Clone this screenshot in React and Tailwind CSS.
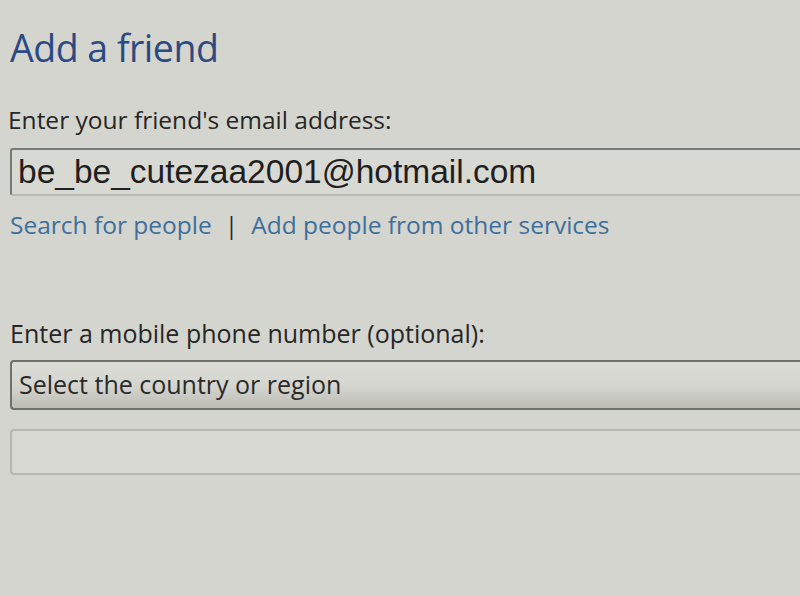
export default function App() {
  return (
    <div className="w-[800px] h-[596px] overflow-hidden bg-[#d5d5cf] text-[#2a2a2a]" style={{ fontFamily: '"Open Sans", "Noto Sans", sans-serif' }}>
      <div className="pl-[10px] pt-[24px]">
        {/* HEADING */}
        <h1 className="text-[37.5px] leading-[48px] text-[#2b4a82] tracking-[-0.5px]">Add a friend</h1>

        {/* EMAIL */}
        <div className="mt-[33px] text-[24.5px] leading-[30px] -ml-[2px] text-[#262626]">Enter your friend's email address:</div>
        <div className="mt-[13px] h-[48px] border-2 border-r-0 border-[#737a78] border-b-[#b9bab4] rounded-l-[3px] bg-[#d9d9d4] flex items-center pl-[6px]">
          <span className="text-[33.5px] leading-none text-[#1f1f1f]" style={{ fontFamily: '"Liberation Sans", Arial, sans-serif' }}>be_be_cutezaa2001@hotmail.com</span>
        </div>
        <div className="mt-[12px] flex items-center text-[24.5px] leading-[34px] text-[#3e6f9c]">
          <span>Search for people</span>
          <span className="mx-[13px] text-[#2a2a2a]">|</span>
          <span>Add people from other services</span>
        </div>

        {/* MOBILE */}
        <div className="mt-[76px] text-[25px] leading-[30px] text-[#262626]">Enter a mobile phone number (optional):</div>
        <div className="mt-[12px] h-[50px] border-2 border-r-0 border-[#6f716c] rounded-l-[4px] bg-gradient-to-b from-[#dcdcd6] via-[#d6d6d0] to-[#bdbdb6] flex items-center pl-[7px]">
          <span className="text-[25px] text-[#2a2a2a]">Select the country or region</span>
        </div>
        <div className="mt-[19px] h-[46px] border-2 border-r-0 border-[#b6b7b1] rounded-l-[4px] bg-[#d8d8d2]"></div>
      </div>
    </div>
  );
}
